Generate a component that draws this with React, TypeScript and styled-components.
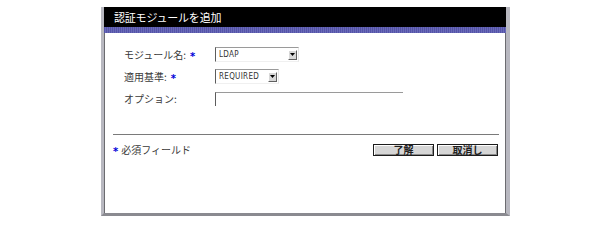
import React from "react";
import styled, { createGlobalStyle, css } from "styled-components";

const GlobalStyle = createGlobalStyle`
  html, body {
    margin: 0;
    padding: 0;
    background: #ffffff;
  }
  body {
    font-family: "Noto Sans CJK JP", "Liberation Sans", sans-serif;
  }
`;

const Page = styled.div`
  width: 609px;
  height: 225px;
  padding: 7px 0 0 101px;
  box-sizing: border-box;
`;

const Frame = styled.div`
  width: 409px;
  height: 209px;
  box-sizing: border-box;
  border-left: 3px solid #b8b8c0;
  border-right: 4px solid #b8b8c0;
  border-bottom: 3px solid #8a8a90;
  box-shadow: inset 1px 0 0 #6c6c70, inset -1px 0 0 #6c6c70;
  display: flex;
  flex-direction: column;
  background: #ffffff;
`;

const TitleBar = styled.div`
  height: 20px;
  background: #000000;
  color: #ffffff;
  font-size: 11px;
  line-height: 20px;
  padding-left: 10px;
  letter-spacing: -0.2px;
`;

const Stripe = styled.div`
  height: 6px;
  background: repeating-linear-gradient(90deg, #5454a8 0 1px, #6a6ab8 1px 2px);
`;

const Body = styled.div`
  flex: 1;
  display: flex;
  flex-direction: column;
  padding: 14px 7px 0 9px;
`;

const Form = styled.div`
  display: flex;
  flex-direction: column;
  gap: 7px;
  padding-left: 11px;
`;

const Row = styled.div`
  display: flex;
  align-items: center;
  height: 15px;
`;

const Label = styled.div`
  width: 91px;
  display: flex;
  align-items: center;
  font-size: 10px;
  color: #3a3a3a;
  white-space: nowrap;
`;

const Required = styled.span<{ $gap?: number }>`
  color: #0000d8;
  font-family: "DejaVu Sans", sans-serif;
  font-weight: bold;
  font-size: 10px;
  line-height: 10px;
  height: 10px;
  margin-left: ${({ $gap }) => $gap ?? 4}px;
  padding-top: 4px;
`;

const fieldEdge = css`
  box-sizing: border-box;
  border-top: 1px solid #9a9a9a;
  border-left: 1px solid #5c5c5c;
  background: #ffffff;
`;

const Select = styled.div<{ $width: number }>`
  ${fieldEdge};
  width: ${({ $width }) => $width}px;
  height: 15px;
  border-right: 1px solid #e8e8e8;
  border-bottom: 1px solid #f0f0f0;
  display: flex;
  align-items: center;
  justify-content: space-between;
  padding: 0 1px 0 3px;
  font-family: "DejaVu Sans Condensed", "Liberation Sans", sans-serif;
  font-size: 8px;
  color: #333;
  letter-spacing: 0.3px;
`;

const DropButton = styled.div`
  width: 9px;
  height: 10px;
  box-sizing: border-box;
  background: #d8d8d8;
  border-top: 1px solid #ffffff;
  border-left: 1px solid #ffffff;
  border-right: 1px solid #606060;
  border-bottom: 1px solid #606060;
  display: flex;
  align-items: center;
  justify-content: center;
`;

const TextInput = styled.div`
  ${fieldEdge};
  width: 188px;
  height: 14px;
`;

const Separator = styled.div`
  margin-top: 28px;
  height: 1px;
  background: #7a7a7a;
`;

const Footer = styled.div`
  display: flex;
  align-items: center;
  justify-content: space-between;
  margin-top: 7px;
  padding-right: 1px;
`;

const Note = styled.div`
  display: flex;
  align-items: center;
  gap: 3px;
  font-size: 10px;
  color: #3a3a3a;
`;

const Buttons = styled.div`
  display: flex;
  gap: 3px;
`;

const Button = styled.div`
  width: 61px;
  height: 12px;
  box-sizing: border-box;
  background: #d6d6d6;
  border: 1px solid #1c1c1c;
  box-shadow: inset 1px 1px 0 #ffffff, inset -1px -1px 0 #8a8a8a;
  display: flex;
  align-items: center;
  justify-content: center;
  font-size: 10px;
  font-weight: bold;
  color: #202020;
  line-height: 10px;
`;

function Arrow() {
  return (
    <svg width="5" height="3" viewBox="0 0 5 3">
      <path d="M0 0h5L2.5 3z" fill="#000" />
    </svg>
  );
}

export default function App() {
  return (
    <>
      <GlobalStyle />
      <Page>
        <Frame>
          <TitleBar>認証モジュールを追加</TitleBar>
          <Stripe />
          <Body>
            <Form>
              <Row>
                <Label>
                  モジュール名:<Required>*</Required>
                </Label>
                <Select $width={84}>
                  LDAP
                  <DropButton>
                    <Arrow />
                  </DropButton>
                </Select>
              </Row>
              <Row>
                <Label>
                  適用基準:<Required>*</Required>
                </Label>
                <Select $width={64}>
                  REQUIRED
                  <DropButton>
                    <Arrow />
                  </DropButton>
                </Select>
              </Row>
              <Row>
                <Label>オプション:</Label>
                <TextInput />
              </Row>
            </Form>
            <Separator />
            <Footer>
              <Note>
                <Required $gap={0}>*</Required>
                必須フィールド
              </Note>
              <Buttons>
                <Button>了解</Button>
                <Button>取消し</Button>
              </Buttons>
            </Footer>
          </Body>
        </Frame>
      </Page>
    </>
  );
}
